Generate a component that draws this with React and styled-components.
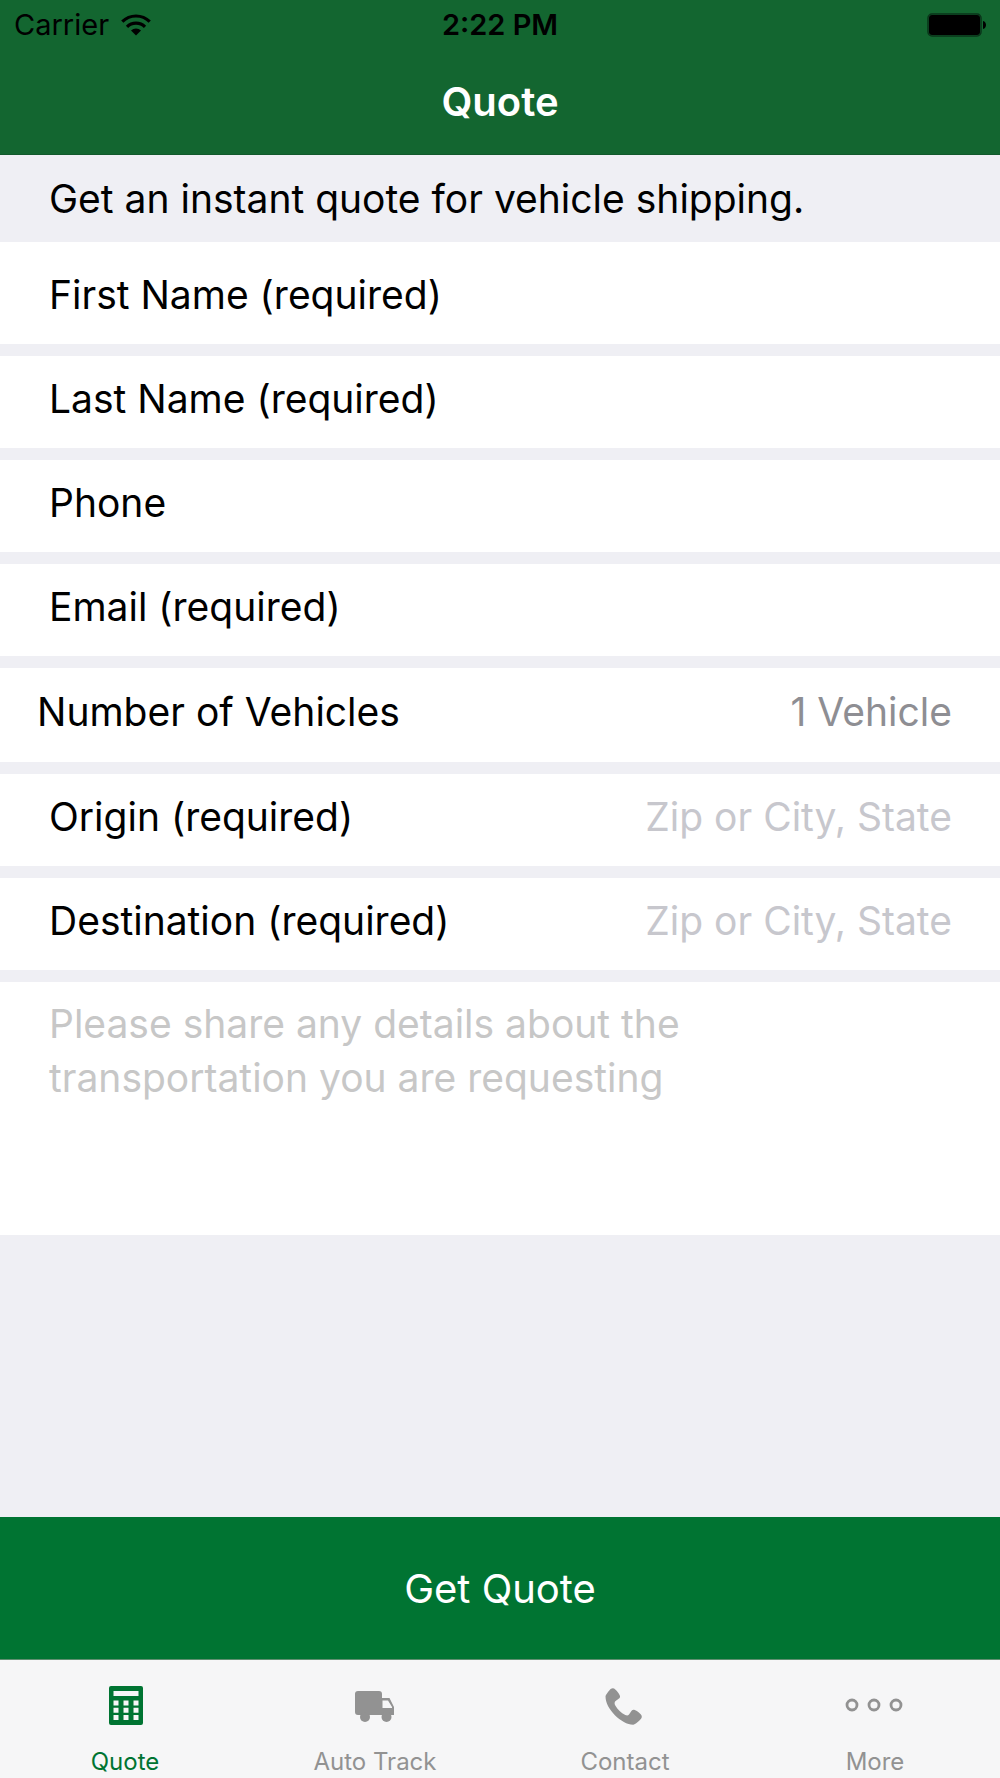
import React from "react";
import styled, {createGlobalStyle} from "styled-components";

const GlobalStyle = createGlobalStyle`
    * {
        box-sizing: border-box;
    }

    body {
        margin: 0;
        background: #efeff4;
        color: #000;
        font-family: Inter, "Liberation Sans", sans-serif;
        font-size: 39px;
        line-height: 54px;
    }

    input, select, textarea, button {
        margin: 0;
        padding: 0;
        border: none;
        border-radius: 0;
        outline: none;
        background: none;
        color: inherit;
        font: inherit;
    }
`;

const Screen = styled.div`
    display: flex;
    flex-direction: column;
    min-height: 100vh;
`;

const Header = styled.header`
    background-color: #136630;
    padding-bottom: 24px;
    border-bottom: 1px solid #12592c;
`;

const StatusBar = styled.div`
    display: grid;
    grid-template-columns: 1fr auto 1fr;
    align-items: center;
    height: 50px;
    padding: 0 14px;
    font-size: 29px;
    line-height: 34px;
`;

const Carrier = styled.div`
    display: flex;
    align-items: center;
    gap: 12px;
`;

const Time = styled.time`
    font-weight: 600;
`;

const Battery = styled.svg`
    justify-self: end;
`;

const Title = styled.h1`
    margin: 0;
    padding: 25px 0 1px;
    color: white;
    font-size: 40px;
    font-weight: 600;
    text-align: center;
`;

const Intro = styled.p`
    margin: 0;
    padding: 17px 48px 16px 49px;
`;

const Form = styled.form`
    flex: 1;
    display: flex;
    flex-direction: column;
    gap: 12px;
`;

const Row = styled.div`
    display: flex;
    align-items: center;
    gap: 24px;
    background-color: white;
    padding: ${props => (props.$first ? '26px' : '16px')} 48px 22px ${props => (props.$inset || '49px')};
`;

const Label = styled.label`
    flex: none;
`;

const Input = styled.input`
    flex: 1;
    min-width: 0;
    height: 54px;
    text-align: right;

    &::placeholder {
        color: #c7c7cd;
        opacity: 1;
    }
`;

const Select = styled.select`
    flex: 1;
    min-width: 0;
    height: 56px;
    appearance: none;
    color: #8e8e93;
    text-align: right;
    text-align-last: right;
`;

const Details = styled.textarea`
    display: block;
    width: 100%;
    height: 253px;
    padding: 15px 240px 16px 49px;
    background-color: white;
    resize: none;

    &::placeholder {
        color: #c7c7c7;
        opacity: 1;
    }
`;

const SubmitButton = styled.button`
    height: 142px;
    margin-top: auto;
    padding-top: 2px;
    background-color: #007432;
    color: white;
    font-size: 40px;
    cursor: pointer;
`;

const TabBar = styled.nav`
    display: grid;
    grid-template-columns: repeat(4, 1fr);
    height: 119px;
    border-top: 1px solid #5f8f70;
    background-color: #f6f6f7;
`;

const Tab = styled.a`
    display: flex;
    flex-direction: column;
    align-items: center;
    gap: 20px;
    padding-top: 25px;
    color: ${props => (props.$active ? '#007432' : '#929292')};
    font-size: 24px;
    line-height: 30px;
    text-decoration: none;
`;

const TabIcon = styled.svg`
    width: 60px;
    height: 42px;
    fill: currentColor;
`;

const fields = [
    {id: 'firstName', label: 'First Name (required)', type: 'text', first: true},
    {id: 'lastName', label: 'Last Name (required)', type: 'text'},
    {id: 'phone', label: 'Phone', type: 'tel'},
    {id: 'email', label: 'Email (required)', type: 'email'}
];

const places = [
    {id: 'origin', label: 'Origin (required)', type: 'text', placeholder: 'Zip or City, State'},
    {id: 'destination', label: 'Destination (required)', type: 'text', placeholder: 'Zip or City, State'}
];

const tabs = [
    {
        name: 'Quote',
        active: true,
        icon: <path fillRule="evenodd" d="M16 1h30a2 2 0 0 1 2 2v35a2 2 0 0 1-2 2H16a2 2 0 0 1-2-2V3a2 2 0 0 1 2-2zM18.500 6v5h25V6zM18.500 15.500v5h5v-5zM28.500 15.500v5h5v-5zM38.500 15.500v5h5v-5zM18.500 22.800v5h5v-5zM28.500 22.800v5h5v-5zM38.500 22.800v5h5v-5zM18.500 30v5h5v-5zM28.500 30v5h5v-5zM38.500 30v5h5v-5z"/>
    },
    {
        name: 'Auto Track',
        icon: <>
            <path fillRule="evenodd" d="M13 6h21a3 3 0 0 1 3 3v4h7.500l4.500 9V30H13a3 3 0 0 1-3-3V9a3 3 0 0 1 3-3zM37.500 15.500v7.500H47v-1l-4-6.500z"/>
            <circle cx="20" cy="32" r="5"/>
            <circle cx="41.500" cy="32" r="5"/>
        </>
    },
    {
        name: 'Contact',
        icon: <path d="M10.500 11.500c0-1.500 4-6.500 5.500-7.700 1.400-.9 3-.6 4.300.6 1.800 1.600 3.500 3.800 4.500 6 .5 1.200.2 2.300-.8 3.100l-3.400 2.600c-1.200 1-1.300 2.700-.3 4.400 2.500 4.200 5.700 7.300 10 9.500 1.500.7 2.800.6 3.700-.5l2.600-3.700c.8-1 1.900-1.300 3.100-.8 2.300 1 4.400 2.500 6 4.300 1.200 1.300 1.500 2.900.5 4.300-1.200 1.600-6.200 6.200-8 6.200C26.500 39.500 10.500 24 10.500 11.500z"/>
    },
    {
        name: 'More',
        icon: <g fill="none" stroke="currentColor" strokeWidth="2.800">
            <circle cx="7" cy="20" r="5"/>
            <circle cx="29" cy="20" r="5"/>
            <circle cx="51" cy="20" r="5"/>
        </g>
    }
];

function Field({field}) {
    return (
        <Row $first={field.first}>
            <Label htmlFor={field.id}>{field.label}</Label>
            <Input id={field.id} name={field.id} type={field.type} placeholder={field.placeholder}/>
        </Row>
    );
}

class App extends React.Component {
    handleSubmit = (e) => {
        e.preventDefault();
    }

    render() {
        return (
            <Screen>
                <GlobalStyle/>
                <Header>
                    <StatusBar>
                        <Carrier>
                            Carrier
                            <svg width="30" height="22" viewBox="0 0 30 22" aria-hidden="true">
                                <path d="M15 21.500l-5-5a7.200 7.200 0 0 1 10 0z"/>
                                <g fill="none" stroke="#000" strokeWidth="3.200">
                                    <path d="M6 12.800a12.800 12.800 0 0 1 18 0"/>
                                    <path d="M1.300 7.600a19.600 19.600 0 0 1 27.400 0"/>
                                </g>
                            </svg>
                        </Carrier>
                        <Time>2:22 PM</Time>
                        <Battery width="59" height="24" viewBox="0 0 59 24" aria-hidden="true">
                            <rect x="1" y="1" width="53" height="22" rx="4" fill="none" stroke="#0a3319" strokeWidth="1.500"/>
                            <rect x="2" y="2" width="51" height="20" rx="3"/>
                            <path d="M56 8c4 1 4 7 0 8z"/>
                        </Battery>
                    </StatusBar>
                    <Title>Quote</Title>
                </Header>
                <Intro>Get an instant quote for vehicle shipping.</Intro>
                <Form onSubmit={this.handleSubmit}>
                    {fields.map(field => <Field key={field.id} field={field}/>)}
                    <Row $inset="37px">
                        <Label htmlFor="vehicles">Number of Vehicles</Label>
                        <Select id="vehicles" name="vehicles" defaultValue="1">
                            <option value="1">1 Vehicle</option>
                            <option value="2">2 Vehicles</option>
                            <option value="3">3 Vehicles</option>
                        </Select>
                    </Row>
                    {places.map(field => <Field key={field.id} field={field}/>)}
                    <Details
                        name="details"
                        aria-label="Details"
                        placeholder="Please share any details about the transportation you are requesting"
                    />
                    <SubmitButton type="submit">Get Quote</SubmitButton>
                </Form>
                <TabBar>
                    {tabs.map(tab => (
                        <Tab key={tab.name} href="#" $active={tab.active}>
                            <TabIcon viewBox="0 0 60 42" aria-hidden="true">{tab.icon}</TabIcon>
                            {tab.name}
                        </Tab>
                    ))}
                </TabBar>
            </Screen>
        );
    }
}

export default App;
